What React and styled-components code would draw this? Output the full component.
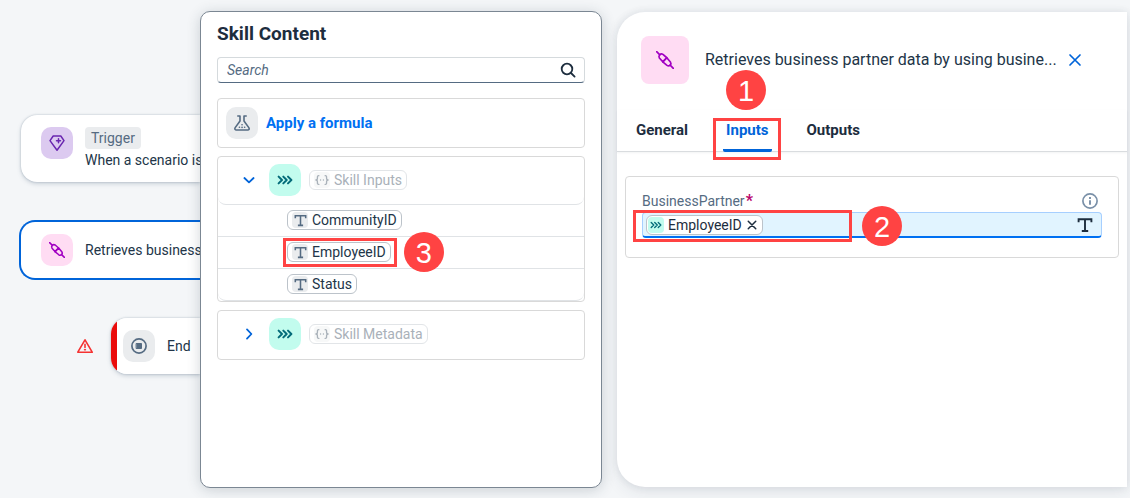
import React from "react";
import styled, { createGlobalStyle, css } from "styled-components";

const GlobalStyle = createGlobalStyle`
  * { box-sizing: border-box; }
  body {
    margin: 0;
    background: #f4f6f8;
    color: #223548;
    font-family: Roboto, "Noto Sans", sans-serif;
    font-size: 14px;
    line-height: 16px;
  }
  button, input { font: inherit; color: inherit; }
  button { border: 0; padding: 0; background: none; cursor: pointer; }
  svg { display: block; flex: none; }
`;

const Page = styled.div`
  display: grid;
  grid-template-columns: 200px 402px minmax(0, 1fr);
  min-height: 100vh;
  padding: 11px 3px 10px 0;
`;

/* ---------- Canvas ---------- */

const Canvas = styled.section`
  display: flex;
  flex-direction: column;
  align-items: stretch;
  padding-top: 104px;
`;

const Node = styled.article`
  display: flex;
  align-items: center;
  gap: 12px;
  min-height: 67px;
  margin-left: 21px;
  padding-left: 20px;
  border-radius: 16px 0 0 16px;
  background: #fff;
  white-space: nowrap;
  box-shadow: 0 0 2px rgba(85, 107, 130, 0.4), 0 2px 4px rgba(85, 107, 130, 0.25);
  ${(p) =>
    p.$top &&
    css`
      align-items: flex-start;
      padding-top: 12px;
    `}
  ${(p) =>
    p.$selected &&
    css`
      min-height: 60px;
      margin: 38px 0 0 19px;
      border: 2px solid #0064d9;
      border-right: 0;
      box-shadow: none;
    `}
  ${(p) =>
    p.$end &&
    css`
      flex: 1;
      min-height: 56px;
      margin-left: 0;
      padding-left: 12px;
      background: linear-gradient(to right, #ea0b0b 6px, #fff 6px);
    `}
`;

const EndRow = styled.div`
  display: flex;
  align-items: center;
  gap: 18px;
  margin: 38px 0 0 77px;
`;

const NodeText = styled.div`
  display: flex;
  flex-direction: column;
  align-items: flex-start;
  gap: 3px;
`;

const Badge = styled.span`
  padding: 3px 6px;
  border-radius: 4px;
  background: #eaecee;
  color: #556b82;
`;

const tones = {
  violet: { bg: "#dccaf0", fg: "#6a26b0" },
  pink: { bg: "#ffdcf3", fg: "#a100c2" },
  grey: { bg: "#eaecee", fg: "#556b82" },
  teal: { bg: "#c2fcee", fg: "#046c7a" },
};

const IconTile = styled.span`
  display: flex;
  flex: none;
  align-items: center;
  justify-content: center;
  width: ${(p) => p.$size || 32}px;
  height: ${(p) => p.$size || 32}px;
  border-radius: ${(p) => p.$radius || 10}px;
  background: ${(p) => tones[p.$tone].bg};
  color: ${(p) => tones[p.$tone].fg};
`;

/* ---------- Skill content popover ---------- */

const Popover = styled.aside`
  z-index: 1;
  display: flex;
  flex-direction: column;
  gap: 8px;
  padding: 10px 16px;
  border: 1px solid #7b8793;
  border-radius: 10px;
  background: #fff;
  box-shadow: 0 2px 14px rgba(34, 53, 72, 0.2);
`;

const Title = styled.h2`
  margin: 0 0 3px;
  font-size: 19px;
  font-weight: 700;
  line-height: 24px;
  color: #1d2d3e;
`;

const SearchField = styled.label`
  display: flex;
  align-items: center;
  height: 26px;
  margin-bottom: 7px;
  padding: 0 8px;
  border: 1px solid #d5dadd;
  border-bottom-color: #556b82;
  border-radius: 4px;
  color: #1d2d3e;
`;

const SearchInput = styled.input`
  flex: 1;
  min-width: 0;
  border: 0;
  padding: 0 1px;
  outline: 0;
  background: none;
  &::placeholder { color: #556b82; font-style: italic; opacity: 1; }
`;

const Card = styled.div`
  border: 1px solid #d9d9d9;
  border-radius: 4px;
`;

const FormulaButton = styled.button`
  display: flex;
  align-items: center;
  gap: 8px;
  width: 100%;
  height: 48px;
  padding-left: 8px;
  font-size: 15px;
  font-weight: 700;
  color: #0070f2;
`;

const GroupHeader = styled.div`
  display: flex;
  align-items: center;
  height: 48px;
  padding: 0 0 1px 23px;
  border-bottom: 1px solid ${(p) => (p.$open ? "#e0e3e6" : "transparent")};
  border-radius: 0 0 8px 8px;
`;

const Toggle = styled.button`
  display: flex;
  width: 16px;
  height: 16px;
  margin-right: 12px;
  color: #0064d9;
`;

const List = styled.ul`
  margin: 0;
  padding: 0;
  list-style: none;
`;

const ListRow = styled.li`
  display: flex;
  align-items: center;
  height: 32px;
  padding: 0 0 1px 69px;
  border-bottom: 1px solid #e0e3e6;
  &:last-child { border-radius: 0 0 8px 8px; }
`;

const Chip = styled.span`
  position: relative;
  display: flex;
  align-items: center;
  gap: 4px;
  height: 20px;
  padding: 0 4px 0 ${(p) => (p.$compact ? 1 : 4)}px;
  border: 1px solid #bcc3ca;
  border-radius: 6px;
  background: #fff;
  white-space: nowrap;
  ${(p) =>
    p.$muted &&
    css`
      margin-left: 8px;
      border-color: #e2e5e8;
      color: #a9b1b9;
    `}
`;

const ChipIcon = styled.span`
  display: flex;
  align-items: center;
  justify-content: center;
  width: 16px;
  height: 16px;
  border-radius: 4px;
  background: ${(p) => (p.$muted ? "#f7f8f8" : "#eaecee")};
  color: ${(p) => (p.$muted ? "#a9b1b9" : "#556b82")};
`;

/* ---------- Details panel ---------- */

const Panel = styled.main`
  margin: 1px 0 1px 15px;
  border-radius: 28px 0 0 28px;
  background: #fff;
  box-shadow: 0 0 8px rgba(34, 53, 72, 0.1), 0 6px 16px rgba(34, 53, 72, 0.08);
`;

const PanelHeader = styled.header`
  display: flex;
  align-items: center;
  padding: 24px 44px 26px 24px;
`;

const PanelTitle = styled.h1`
  flex: 1;
  margin: 0 8px 0 16px;
  overflow: hidden;
  font-size: 16px;
  font-weight: 400;
  line-height: 24px;
  text-overflow: ellipsis;
  white-space: nowrap;
`;

const IconButton = styled.button`
  display: flex;
  color: ${(p) => p.$color || "#0064d9"};
`;

const Tabs = styled.div`
  display: flex;
  gap: 32px;
  padding-left: 16px;
  border-bottom: 1px solid #d9dcdf;
  box-shadow: 0 1px 2px rgba(34, 53, 72, 0.06);
`;

const Tab = styled.button`
  position: relative;
  height: 42px;
  margin-bottom: -1px;
  padding: 0 3px;
  border-bottom: 3px solid ${(p) => (p["aria-selected"] ? "#0064d9" : "transparent")};
  border-radius: 2px;
  font-size: 15px;
  font-weight: 700;
  color: ${(p) => (p["aria-selected"] ? "#0064d9" : "#1d2d3e")};
`;

const FormCard = styled(Card)`
  margin: 24px 8px 0;
  padding: 16px 16px 19px;
`;

const LabelRow = styled.div`
  display: flex;
  align-items: center;
  justify-content: space-between;
  margin-bottom: 3px;
  padding-right: 4px;
  color: #556b82;
`;

const Required = styled.span`
  margin-left: 1px;
  font-size: 16px;
  font-weight: 700;
  color: #ba066c;
`;

const TokenField = styled.div`
  position: relative;
  display: flex;
  align-items: center;
  height: 26px;
  padding: 0 8px 0 3px;
  border: 1px solid #a6cfff;
  border-bottom: 2px solid #0070f2;
  border-radius: 4px;
  background: #e1f4ff;
  color: #1d2d3e;
`;

const TokenInput = styled.input`
  flex: 1;
  min-width: 0;
  border: 0;
  outline: 0;
  background: none;
`;

/* ---------- Step callouts ---------- */

const Outline = styled.span`
  position: absolute;
  z-index: 2;
  inset: ${(p) => p.$inset};
  width: ${(p) => p.$width || "auto"};
  border: 3px solid #ff4343;
  pointer-events: none;
`;

const Step = styled.span`
  position: absolute;
  z-index: 2;
  inset: ${(p) => p.$inset};
  width: 40px;
  height: 40px;
  border-radius: 50%;
  background: #ff4343;
  color: #fff;
  font-family: "Liberation Sans", sans-serif;
  font-size: 29px;
  font-weight: 400;
  line-height: 42px;
  text-align: center;
  pointer-events: none;
`;

/* ---------- Icons ---------- */

const Icon = ({ size = 16, width = 1.5, children }) => (
  <svg width={size} height={size} viewBox="0 0 16 16" fill="none" stroke="currentColor"
    strokeWidth={width} strokeLinecap="round" strokeLinejoin="round" aria-hidden="true">
    {children}
  </svg>
);

const GemIcon = () => (
  <Icon>
    <path d="M4.2 1h7.6L15 5.6 8 15.2 1 5.6z" />
    <path d="M9.5 3.8v4M7.5 5.8h4" />
  </Icon>
);

const ConnectorIcon = ({ size }) => (
  <Icon size={size} width={1.5}>
    <path d="M.6.6l2.8 2.8M12.6 12.6l2.8 2.8" />
    <path d="M3 6.2C1.8 4 4 1.8 6.2 3L9.6 6 6 9.6z" />
    <path d="M9.6 6l3.2 3.8c1.4 2-1 4.4-3 3L6 9.6z" />
  </Icon>
);

const StopIcon = () => (
  <Icon width={1.7}>
    <circle cx="8" cy="8" r="7.1" />
    <rect x="5.5" y="5.5" width="5" height="5" fill="currentColor" strokeWidth="1" />
  </Icon>
);

const WarningIcon = () => (
  <Icon width={1.6}>
    <path d="M8 1.8L15.2 14.2H.8z" />
    <path d="M8 6.2v3.2M7.6 11.8h.8" />
  </Icon>
);

const SearchIcon = () => (
  <Icon width={1.8}>
    <circle cx="7" cy="7" r="5.3" />
    <path d="M11 11l3.6 3.6" />
  </Icon>
);

const FlaskIcon = () => (
  <Icon width={1.6}>
    <path d="M3.8 1H6v5L1.2 12.6c-.8 1.3 0 2.4 1.1 2.4h11.4c1.3 0 1.9-1.1 1.1-2.4L10 6V1h2.2" />
    <path d="M5.4 12.2h.1M8 9.8h.1M8 12.4h.1M10.6 12.2h.1" />
  </Icon>
);

const ChevronsIcon = ({ size, width = 1.7 }) => (
  <Icon size={size} width={width}>
    <path d="M1.6 4.6L5 8l-3.4 3.4M6.3 4.6L9.7 8l-3.4 3.4M11 4.6L14.4 8 11 11.4" />
  </Icon>
);

const TypeIcon = ({ size }) => (
  <Icon size={size} width={1.9}>
    <path strokeLinecap="butt" strokeLinejoin="miter"
      d="M1.6 5.2V2.2h12.8v3M8 2v12M4.8 14h6.4" />
  </Icon>
);

const BracesIcon = () => (
  <Icon size={14} width={1.5}>
    <path d="M4.4 3c-2 0-1.6 1.4-1.6 2.6C2.8 7 2.2 8 1 8c1.2 0 1.8 1 1.8 2.4 0 1.2-.4 2.6 1.6 2.6M11.6 3c2 0 1.6 1.4 1.6 2.6 0 1.4.6 2.4 1.8 2.4-1.2 0-1.8 1-1.8 2.4 0 1.2.4 2.6-1.6 2.6M6.3 8h.1M9.6 8h.1" />
  </Icon>
);

const CrossIcon = ({ size, width }) => (
  <Icon size={size} width={width}>
    <path d="M3 3l10 10M13 3L3 13" />
  </Icon>
);

const InfoIcon = () => (
  <Icon width={1.7}>
    <circle cx="8" cy="8" r="7.1" />
    <path strokeLinecap="butt" strokeWidth="1.9" d="M8 7.2v4.6M8 4v1.9" />
  </Icon>
);

/* ---------- Parts ---------- */

const TypeChip = ({ children, highlight }) => (
  <Chip>
    <ChipIcon><TypeIcon size={13} /></ChipIcon>
    {children}
    {highlight}
  </Chip>
);

const Group = ({ name, open, children }) => (
  <Card>
    <GroupHeader $open={open}>
      <Toggle type="button" aria-expanded={!!open} aria-label={name}>
        <Icon width={1.8}>
          <path d={open ? "M3.4 6L8 10.4 12.6 6" : "M6 3.4L10.4 8 6 12.6"} />
        </Icon>
      </Toggle>
      <IconTile $tone="teal"><ChevronsIcon size={16} width={2} /></IconTile>
      <Chip $muted>
        <ChipIcon $muted><BracesIcon /></ChipIcon>
        {name}
      </Chip>
    </GroupHeader>
    {children}
  </Card>
);

export default function App() {
  return (
    <>
      <GlobalStyle />
      <Page>
        <Canvas>
          <Node $top>
            <IconTile $tone="violet"><GemIcon /></IconTile>
            <NodeText>
              <Badge>Trigger</Badge>
              <span>When a scenario is</span>
            </NodeText>
          </Node>
          <Node $selected>
            <IconTile $tone="pink"><ConnectorIcon size={16} /></IconTile>
            <span>Retrieves business</span>
          </Node>
          <EndRow>
            <IconButton as="span" $color="#f53232"><WarningIcon /></IconButton>
            <Node $end>
              <IconTile $tone="grey"><StopIcon /></IconTile>
              <span>End</span>
            </Node>
          </EndRow>
        </Canvas>

        <Popover>
          <Title>Skill Content</Title>
          <SearchField>
            <SearchInput type="text" placeholder="Search" aria-label="Search" />
            <SearchIcon />
          </SearchField>
          <Card>
            <FormulaButton type="button">
              <IconTile $tone="grey"><FlaskIcon /></IconTile>
              Apply a formula
            </FormulaButton>
          </Card>
          <Group name="Skill Inputs" open>
            <List>
              <ListRow><TypeChip>CommunityID</TypeChip></ListRow>
              <ListRow>
                <TypeChip
                  highlight={
                    <>
                      <Outline $inset="-5px -7px -6px -5px" />
                      <Step $inset="-11px -54px auto auto">3</Step>
                    </>
                  }
                >
                  EmployeeID
                </TypeChip>
              </ListRow>
              <ListRow><TypeChip>Status</TypeChip></ListRow>
            </List>
          </Group>
          <Group name="Skill Metadata" />
        </Popover>

        <Panel>
          <PanelHeader>
            <IconTile $tone="pink" $size={48} $radius={8}><ConnectorIcon size={18} /></IconTile>
            <PanelTitle>Retrieves business partner data by using busine...</PanelTitle>
            <IconButton type="button" aria-label="Close"><CrossIcon size={16} width={1.7} /></IconButton>
          </PanelHeader>
          <Tabs role="tablist">
            <Tab type="button" role="tab" aria-selected={false}>General</Tab>
            <Tab type="button" role="tab" aria-selected={true}>
              Inputs
              <Outline $inset="8px -9px -11px -10px" />
              <Step $inset="-40px auto auto 3px">1</Step>
            </Tab>
            <Tab type="button" role="tab" aria-selected={false}>Outputs</Tab>
          </Tabs>
          <FormCard>
            <LabelRow>
              <label htmlFor="business-partner">BusinessPartner<Required>*</Required></label>
              <IconButton type="button" aria-label="Information" $color="#7a90a8"><InfoIcon /></IconButton>
            </LabelRow>
            <TokenField>
              <Chip $compact>
                <IconTile $tone="teal" $size={16} $radius={4}><ChevronsIcon size={12} width={1.8} /></IconTile>
                EmployeeID
                <IconButton type="button" aria-label="Remove" $color="#1d2d3e"><CrossIcon size={12} width={2} /></IconButton>
              </Chip>
              <TokenInput id="business-partner" type="text" />
              <TypeIcon size={16} />
              <Outline $inset="-3px auto -6px -10px" $width="219px" />
              <Step $inset="-7px auto auto 219px">2</Step>
            </TokenField>
          </FormCard>
        </Panel>
      </Page>
    </>
  );
}
